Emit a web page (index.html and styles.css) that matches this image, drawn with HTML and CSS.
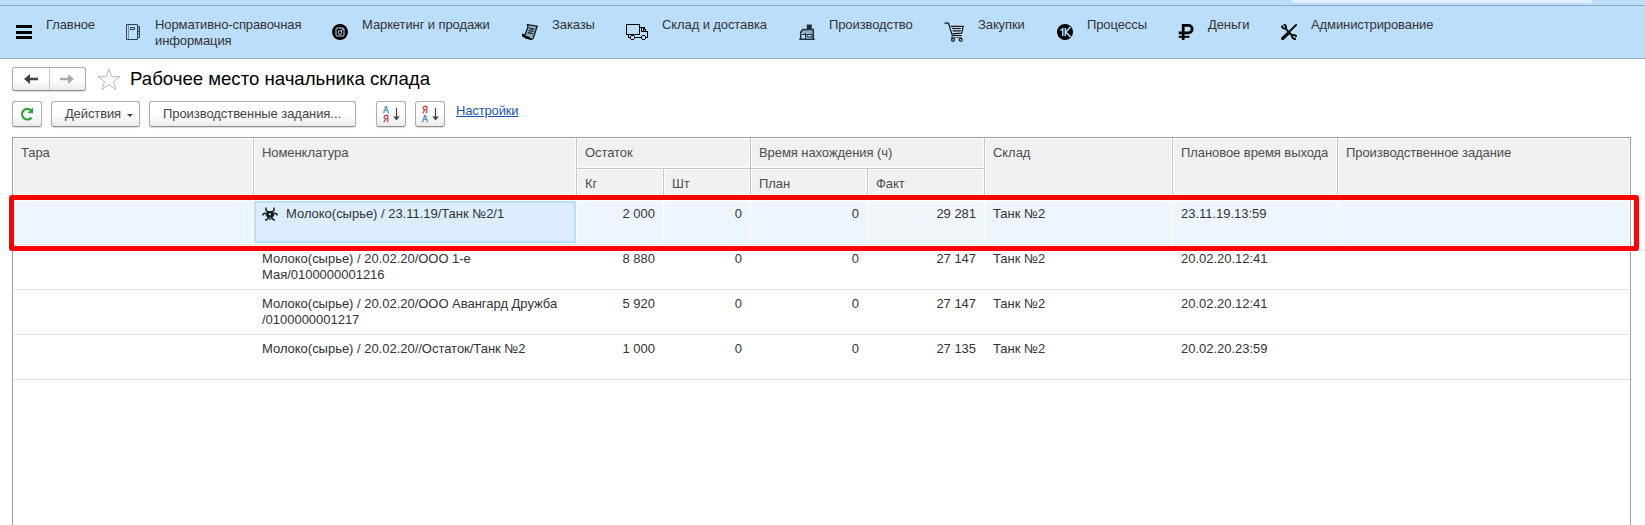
FILE: index.html
```html
<!DOCTYPE html>
<html lang="ru">
<head>
<meta charset="utf-8">
<title>Рабочее место начальника склада</title>
<link rel="stylesheet" href="styles.css">
</head>
<body>
<div class="topbar"><div class="search-edge"></div></div>
<nav class="nav">
  <a class="nav-item"><svg class="icon" width="16" height="16" viewBox="0 0 16 16"><path d="M0 1h16v3H0zM0 7h16v3H0zM0 12h16v3H0z"/></svg><span>Главное</span></a>
  <a class="nav-item"><svg class="icon" width="16" height="16" viewBox="0 0 16 16" fill="none" stroke="#2b4355"><path d="M1.500 .5h11v15h-11z"/><path d="M3.500 1v14" stroke="#7190a8"/><path d="M5.500 3.500h4v2h-4z"/><path d="M12.500 2.500h2v11h-2M13 5h2M13 7.500h2M13 10h2"/></svg><span>Нормативно-справочная<br>информация</span></a>
  <a class="nav-item"><svg class="icon" width="16" height="16" viewBox="0 0 16 16"><circle cx="8" cy="8" r="8"/><rect x="4" y="4" width="8" height="8" rx="1" fill="none" stroke="#bbdefb"/><circle cx="8" cy="8.500" r="1.800" fill="none" stroke="#bbdefb"/><path d="M9 7L11.500 4.500" stroke="#bbdefb"/></svg><span>Маркетинг и продажи</span></a>
  <a class="nav-item"><svg class="icon" width="16" height="16" viewBox="0 0 16 16"><path d="M5.500 .7L15.300 2.200L14.500 4.200L11.500 13.500Q10.800 15.600 8.800 15L.8 12.200Q0 11 1 10.300L3 11L6 3Z" fill="#8caabf" stroke="#10181e" stroke-width="1.300"/><path d="M.7 11.200L7.500 13.500Q8 15.600 9.500 15.400Q2 14.500 .7 11.200Z" stroke="#000"/><path d="M7.200 4.300l5 1M6.500 6.500l5 1M5.800 8.700l5 1" stroke="#10181e" stroke-width="1.200"/></svg><span>Заказы</span></a>
  <a class="nav-item"><svg class="icon" width="22" height="16" viewBox="0 0 22 16" fill="none" stroke="#000" shape-rendering="crispEdges"><path d="M.5 .5h13v10H.5zM14 3.500h4l2 4h1.500v5.500h-2M2.500 11v2.500H4M9 13.500h6M15.500 4v4M17.500 4v3M15 7.500h5"/><path d="M5.500 11.500h2l1 1v2l-1 1h-2l-1-1v-2zM16.500 11.500h2l1 1v2l-1 1h-2l-1-1v-2z"/></svg><span>Склад и доставка</span></a>
  <a class="nav-item"><svg class="icon" width="16" height="16" viewBox="0 0 16 16"><path d="M7.800 .5h5V5.500h-5z" fill="#22313c"/><path d="M1.700 8.200L3.800 5.500H14.300V15" fill="#8fafc6" stroke="#22313c" stroke-width="1.500"/><path d="M1.700 8v7.500M.3 15.300h15.400" stroke="#22313c" stroke-width="1.500"/><path d="M3 10.500h3.500v4M8 10.500h5v2.500H8zM6.500 9v6" fill="#bbdefb" stroke="#22313c"/></svg><span>Производство</span></a>
  <a class="nav-item"><svg class="icon icon-cart" width="20" height="20" viewBox="0 0 20 20" fill="none" stroke="#151515" stroke-width="1.200"><path d="M.5 1.200H4.500L8.300 13.500H18"/><path d="M6.800 4.300H19.200L17.700 11.200L8.500 11.800M8 6.500h9M8.700 8.900h8"/><path d="M9 13.500L7.500 15.500H18" stroke="#53626d"/><circle cx="9" cy="17.800" r="1.500"/><circle cx="16.700" cy="17.800" r="1.500"/></svg><span>Закупки</span></a>
  <a class="nav-item"><svg class="icon" width="16" height="16" viewBox="0 0 16 16"><circle cx="8" cy="8" r="8"/><path d="M3.300 6.500L5.800 4.800V12M8.300 4v8" fill="none" stroke="#bbdefb" stroke-width="1.500"/><path d="M13.500 3L8.800 8L13.500 13" fill="none" stroke="#bbdefb" stroke-width="1.600"/></svg><span>Процессы</span></a>
  <a class="nav-item"><svg class="icon" width="16" height="16" viewBox="0 0 16 16" fill="none" stroke="#000"><path d="M5.200 16V1.400H10.500A3.700 3.700 0 0 1 10.500 8.800H.7" stroke-width="2.700"/><path d="M.7 12.800H11.500" stroke-width="2"/></svg><span>Деньги</span></a>
  <a class="nav-item"><svg class="icon" width="16" height="16" viewBox="0 0 16 16" fill="none" stroke="#111"><path d="M1 1.500Q1 5 4.500 4.500L11 11.500Q11 15 15 15M2.500 .5Q5.500 1 5 4M11.500 11Q15 10.500 15.500 13" stroke-width="2"/><path d="M15 1L8.500 7.500" stroke-width="2"/><path d="M14.500 .5L15.500 1.500" stroke-width="2.500"/><path d="M7 9.500L1.700 14.500" stroke-width="3.300" stroke-linecap="round"/></svg><span>Администрирование</span></a>
</nav>
<header class="heading">
  <div class="history">
    <button class="btn-hist"><svg width="14" height="10" viewBox="0 0 14 10"><path d="M0 5L6 0V3.700H14V6.300H6V10Z" fill="#444"/></svg></button>
    <button class="btn-hist"><svg width="14" height="10" viewBox="0 0 14 10"><path d="M14 5L8 0V3.700H0V6.300H8V10Z" fill="#aaa"/></svg></button>
  </div>
  <svg class="star" width="24" height="23" viewBox="0 0 24 23"><path d="M12 1L14.800 8.700H23L16.500 13.500L19 21.500L12 16.700L5 21.500L7.500 13.500L1 8.700H9.200Z" fill="#fff" stroke="#b4bac0"/></svg>
  <h1 class="title">Рабочее место начальника склада</h1>
</header>
<div class="toolbar">
  <button class="btn btn-icon"><svg width="14" height="14" viewBox="0 0 14 14"><path d="M11.500 10.500A5.300 5.300 0 1 1 10.800 3.200" fill="none" stroke="#2fa336" stroke-width="2.200"/><path d="M13 .5V6.200H7.300Z" fill="#2fa336"/></svg></button>
  <button class="btn btn-actions"><span>Действия</span><span class="caret"></span></button>
  <button class="btn btn-tasks"><span>Производственные задания...</span></button>
  <button class="btn btn-icon btn-sort"><span class="letters"><span class="blue">А</span><span class="red">Я</span></span><svg width="7" height="13" viewBox="0 0 7 13"><path d="M3.500 0V10" stroke="#444" stroke-width="1.200"/><path d="M.3 8.500H6.700L3.500 12.500Z" fill="#444"/></svg></button>
  <button class="btn btn-icon btn-sort"><span class="letters"><span class="red">Я</span><span class="blue">А</span></span><svg width="7" height="13" viewBox="0 0 7 13"><path d="M3.500 0V10" stroke="#444" stroke-width="1.200"/><path d="M.3 8.500H6.700L3.500 12.500Z" fill="#444"/></svg></button>
  <a class="settings">Настройки</a>
</div>
<main class="frame">
  <table class="grid">
    <colgroup><col class="c1"><col class="c2"><col class="c3"><col class="c4"><col class="c5"><col class="c6"><col class="c7"><col class="c8"><col class="c9"></colgroup>
    <thead>
      <tr class="h1"><th rowspan="2">Тара</th><th rowspan="2">Номенклатура</th><th colspan="2" class="group">Остаток</th><th colspan="2" class="group">Время нахождения (ч)</th><th rowspan="2">Склад</th><th rowspan="2">Плановое время выхода</th><th rowspan="2">Производственное задание</th></tr>
      <tr class="h2"><th>Кг</th><th>Шт</th><th>План</th><th>Факт</th></tr>
    </thead>
    <tbody>
      <tr class="selected"><td></td><td class="active"><svg class="hazard" width="16" height="14" viewBox="0 0 16 14" fill="none" stroke="#1b2024"><path d="M4.300 .5Q3 3.500 6 4.800H10Q13 3.500 11.700 .5" stroke-width="1.500"/><path d="M.6 8.500Q1.500 5.500 4.500 6.500M15.400 8.500Q14.500 5.500 11.500 6.500M3 13Q6 13 6.500 10M13 13Q10 13 9.500 10" stroke-width="1.500"/><path d="M5 4.500H11L12.500 8L10 11.500L8.700 9.800V13H7.300V9.800L6 11.500L3.500 8Z" fill="#1b2024" stroke="none"/><circle cx="8" cy="7.300" r="1" fill="#dceefd" stroke="none"/></svg>Молоко(сырье) / 23.11.19/Танк №2/1</td><td class="num">2 000</td><td class="num">0</td><td class="num">0</td><td class="num fact">29 281</td><td>Танк №2</td><td>23.11.19.13:59</td><td></td></tr>
      <tr><td></td><td>Молоко(сырье) / 20.02.20/ООО 1-е<br>Мая/0100000001216</td><td class="num">8 880</td><td class="num">0</td><td class="num">0</td><td class="num">27 147</td><td>Танк №2</td><td>20.02.20.12:41</td><td></td></tr>
      <tr><td></td><td>Молоко(сырье) / 20.02.20/ООО Авангард Дружба<br>/0100000001217</td><td class="num">5 920</td><td class="num">0</td><td class="num">0</td><td class="num">27 147</td><td>Танк №2</td><td>20.02.20.12:41</td><td></td></tr>
      <tr><td></td><td>Молоко(сырье) / 20.02.20//Остаток/Танк №2</td><td class="num">1 000</td><td class="num">0</td><td class="num">0</td><td class="num">27 135</td><td>Танк №2</td><td>20.02.20.23:59</td><td></td></tr>
    </tbody>
  </table>
  <div class="marker"></div>
</main>
</body>
</html>
```
FILE: styles.css
```css
* { box-sizing: border-box; }
body {
  margin: 0;
  height: 525px;
  overflow: hidden;
  display: flex;
  flex-direction: column;
  background: #fff;
  color: #333;
  font: 13px/16px "Liberation Sans", Arial, sans-serif;
}
.topbar { height: 6px; flex: none; background: #bbdefb; border-bottom: 1px solid #86a9c8; padding-left: 1292px; }
.search-edge { width: 300px; height: 3px; background: #e1f1ff; border-radius: 0 0 2px 2px; }
.nav {
  flex: none;
  height: 53px;
  padding: 10px 0 0 16px;
  background: #bbdefb;
  border-bottom: 1px solid #8fb0cc;
  display: grid;
  grid-template-columns: 109px 207px 190px 104px 173px 145px 113px 121px 103px auto;
  letter-spacing: -0.1px;
}
.nav-item { display: flex; gap: 14px; align-items: flex-start; white-space: nowrap; padding-top: 1px; }
.icon { flex: none; margin-top: 7px; }
.icon-cart { margin-top: 5px; }
.heading { flex: none; display: flex; height: 42px; padding: 8px 0 0 12px; }
.history { display: flex; width: 74px; height: 24px; border: 1px solid #adadad; border-bottom-color: #8d8d8d; border-radius: 3px; background: linear-gradient(#fff, #fff 50%, #ececec); box-shadow: 0 1px 1px #ddd; }
.btn-hist { flex: 1; padding: 0; border: 0; background: none; display: flex; align-items: center; justify-content: center; }
.btn-hist + .btn-hist { border-left: 1px solid #ccc; }
.star { margin: 1px 10px 0 11px; }
.title { margin: 0 0 0 -1px; font-size: 18.600px; line-height: 20px; font-weight: 400; color: #000; padding-top: 2px; white-space: nowrap; }
.toolbar { flex: none; display: flex; height: 36px; padding-left: 12px; gap: 9px; }
.btn { height: 26px; padding: 0; font: inherit; color: #444; border: 1px solid #adadad; border-bottom-color: #8d8d8d; border-radius: 3px; background: linear-gradient(#fff, #fff 50%, #ececec); box-shadow: 0 1px 1px #ddd; display: flex; align-items: center; justify-content: center; white-space: nowrap; }
.btn-icon { width: 30px; }
.btn-actions { width: 89px; gap: 6px; padding-left: 7px; letter-spacing: -0.1px; }
.btn-tasks { width: 207px; margin-right: 11px; padding-left: 13px; justify-content: flex-start; letter-spacing: -0.06px; }
.caret { border: 3px solid transparent; border-top-color: #444; border-bottom: 0; margin-top: 2px; }
.btn-sort { gap: 3px; }
.letters { display: flex; flex-direction: column; align-items: center; width: 7px; font-family: "DejaVu Sans Condensed", "DejaVu Sans", sans-serif; font-stretch: condensed; font-size: 9.500px; line-height: 9px; }
.blue { color: #3b87bd; -webkit-text-stroke: 0.3px #3b87bd; }
.red { color: #bc3038; -webkit-text-stroke: 0.3px #bc3038; }
.settings { color: #1c55ae; text-decoration: underline; margin-left: 2px; padding-top: 2px; letter-spacing: -0.15px; }
.frame { position: relative; flex: 1; margin: 0 14px 0 12px; border: 1px solid #9f9f9f; border-bottom: 0; }
.grid { table-layout: fixed; width: 1617px; border-collapse: separate; border-spacing: 0; }
.c1 { width: 241px; } .c2 { width: 323px; } .c3 { width: 87px; } .c4 { width: 87px; } .c5 { width: 117px; }
.c6 { width: 117px; } .c7 { width: 188px; } .c8 { width: 165px; } .c9 { width: 292px; }
th { font-weight: 400; text-align: left; vertical-align: top; padding: 7px 0 0 8px; color: #4d4d4d; background: #f1f1f1; border-right: 1px solid #c6c6c6; box-shadow: inset 0 0 0 1px #fff; white-space: nowrap; letter-spacing: -0.07px; }
.h1 th:last-child { border-right: 0; }
.h1, .h2 { height: 31px; }
.group { border-bottom: 1px solid #c6c6c6; }
td { height: 45px; vertical-align: top; padding: 6px 0 0 8px; border-bottom: 1px solid #e4e4e4; white-space: nowrap; letter-spacing: -0.02px; }
.num { text-align: right; padding-right: 9px; }
.selected td { background: #edf6fe; border-right: 1px solid #fff; box-shadow: inset 0 1px #fff, inset 0 -1px #fff; }
.selected .num { padding-right: 8px; }
.selected .fact { background: #f1f6fb; }
.selected .active { background: #dceefd; box-shadow: inset 0 1px #fff, inset 0 -1px #fff, inset 2px 0 #b9dff9, inset -2px 0 #b9dff9, inset 0 3px #b9dff9, inset 0 -3px #b9dff9; }
.hazard { vertical-align: -3px; margin-right: 8px; }
.marker { position: absolute; left: -4px; top: 57px; width: 1630px; height: 56px; border: 5px solid #f00; border-radius: 3px; }
```
